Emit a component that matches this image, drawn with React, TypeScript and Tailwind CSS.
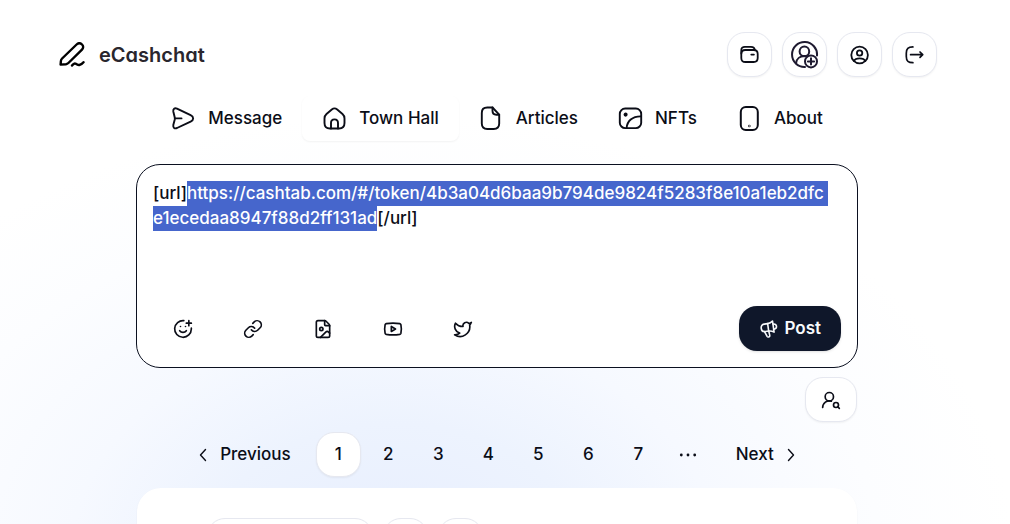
import { useEffect, useRef, useState } from "react";
import type { ReactNode } from "react";
import {
  FileImage,
  Link as LinkIcon,
  SmilePlus,
  Twitter,
  UserRoundSearch,
  Youtube,
} from "lucide-react";
import { clsx } from "clsx";

type IconProps = {
  size: number;
  stroke?: number;
  className?: string;
  children: ReactNode;
};

function Icon({ size, stroke = 1.6, className, children }: IconProps) {
  return (
    <svg
      width={size}
      height={size}
      viewBox={`0 0 ${size} ${size}`}
      fill="none"
      stroke="currentColor"
      strokeWidth={stroke}
      strokeLinecap="round"
      strokeLinejoin="round"
      aria-hidden="true"
      className={clsx("shrink-0", className)}
    >
      {children}
    </svg>
  );
}

const LogoIcon = () => (
  <Icon size={26} stroke={2.4} className="text-black">
    <path d="M1.6 22.6 1.9 19c.1-1 .5-1.8 1.2-2.5L17.6 2.5c1.6-1.5 3.9-1.5 5.4 0 1.6 1.6 1.5 3.6 0 5.1L9.4 21c-.7.7-1.5 1.1-2.5 1.2z" />
    <path d="M13 23.5c1.5-2 2.7-2.5 3.8-1.7 1.2.9 2 1.5 3.5 1.2 1.8-.4 3-1.3 4.2-2.8" />
  </Icon>
);

const WalletIcon = () => (
  <Icon size={20} stroke={1.8}>
    <path d="M1.3 9c0-2.8 1.400-4 4-4h8.400c2.800 0 4 1.400 4 4v4c0 2.800-1.200 4-4 4H5.500c-2.800 0-4.200-1.200-4.200-4z" />
    <path d="M1.3 8.500V5.200C1.300 3.100 2.700 1.900 4.800 1.900H11c2 0 3.600.9 3.800 3.100" />
    <path d="M11.3 9.600h2.600" />
  </Icon>
);

const AddUserIcon = () => (
  <Icon size={28} stroke={2} className="text-[#1e1a30]">
    <path d="M14 26A12.500 12.500 0 1 1 26 14.500" />
    <circle cx="13.400" cy="10.400" r="4.800" />
    <path d="M5 22.300c.5-4.500 4-7.200 8.600-7.200 1 0 1.800.1 2.600.4" />
    <circle cx="20" cy="20.400" r="6" />
    <path d="M20 17.300v6.200M16.900 20.400h6.200" />
  </Icon>
);

const ProfileIcon = () => (
  <Icon size={20} stroke={1.8}>
    <circle cx="9.600" cy="10" r="8.300" />
    <circle cx="9.600" cy="8" r="2.700" />
    <path d="M4 16c.8-1.8 2.8-2.6 5.6-2.6s4.8.8 5.6 2.6" />
  </Icon>
);

const LogoutIcon = () => (
  <Icon size={20} stroke={1.7}>
    <path d="M7.900 1.900C3.100 1.900 1.300 3.500 1.300 8.200v3.200c0 4.700 1.800 6.300 6.600 6.300" />
    <path d="M5.600 9.700h12M15 7 17.700 9.700 15 12.400" />
  </Icon>
);

const MessageIcon = () => (
  <Icon size={25} stroke={1.9}>
    <path d="M2.3 5.5C1.9 2.8 3.6 1.6 6 2.6l13.6 6.6c3.4 1.7 3.4 4.7 0 6.4L6 22c-2.4 1-4.1-.2-3.7-2.9l1.4-5.4c.2-.9.2-1.7 0-2.5z" />
    <path d="M4.2 12.4h6.3" />
  </Icon>
);

const HomeIcon = () => (
  <Icon size={25} stroke={1.9}>
    <path d="M2.5 12.5c0-2 .6-3.3 2-4.5l5.3-4.5c1.8-1.5 3.6-1.5 5.4 0L20.5 8c1.4 1.2 2 2.5 2 4.5v4.6c0 3.6-1.8 5.4-5.4 5.4H7.9c-3.6 0-5.4-1.8-5.4-5.4z" />
    <path d="M9 22.5V17c0-2.3 1.3-3.6 3.5-3.6S16 14.7 16 17v5.5" />
  </Icon>
);

const FileIcon = () => (
  <Icon size={25} stroke={1.9}>
    <path d="M13.5 1.5H8.3c-3.7 0-5.5 1.8-5.5 5.4v10.7c0 3.6 1.8 5.4 5.5 5.4h6.4c3.7 0 5.5-1.8 5.5-5.4V8.7z" />
    <path d="M13.5 1.5v3.3c0 2.6 1.2 3.9 3.8 3.9h2.9" />
  </Icon>
);

const ImageIcon = () => (
  <Icon size={25} stroke={1.9}>
    <rect x="1.8" y="2.5" width="21.4" height="19.6" rx="5.4" />
    <circle cx="7.6" cy="8.6" r="1.1" fill="currentColor" />
    <path d="M8.6 22c.6-6.8 5.6-11.8 14.5-11.6" />
  </Icon>
);

const PhoneIcon = () => (
  <Icon size={25} stroke={2}>
    <rect x="3.8" y="1" width="17" height="23" rx="5" />
    <circle cx="12.3" cy="20" r=".3" fill="currentColor" />
  </Icon>
);

const MegaphoneIcon = () => (
  <Icon size={20} stroke={1.6}>
    <g transform="rotate(-8 10 10)">
      <path d="M9.4 4.500H6C3.800 4.500 2.400 6 2.400 8.200S3.800 12 6 12h3.400c2 0 3.700.6 5.200 1.800V2.600C13.100 3.900 11.400 4.500 9.400 4.500z" />
      <path d="M9.4 4.500V12M14.600 5.600c2 0 3.200 1.100 3.200 2.700s-1.200 2.700-3.200 2.700" />
      <path d="m5.200 12 1.900 5c.6 1.400 2.900 1 2.800-.6L9.400 12" />
    </g>
  </Icon>
);

const accountActions = [
  { label: "Wallet", icon: WalletIcon },
  { label: "Add contact", icon: AddUserIcon },
  { label: "Profile", icon: ProfileIcon },
  { label: "Log out", icon: LogoutIcon },
];

const tabs = [
  { label: "Message", icon: MessageIcon },
  { label: "Town Hall", icon: HomeIcon },
  { label: "Articles", icon: FileIcon },
  { label: "NFTs", icon: ImageIcon },
  { label: "About", icon: PhoneIcon },
];

const attachments = [
  { label: "Emoji", icon: SmilePlus },
  { label: "Link", icon: LinkIcon },
  { label: "Image", icon: FileImage },
  { label: "YouTube", icon: Youtube },
  { label: "Twitter", icon: Twitter },
];

const pages = [1, 2, 3, 4, 5, 6, 7];

const outlineButton =
  "flex h-[45px] items-center justify-center rounded-[18px] border border-[#e6e8f0] bg-white shadow-xs";

function Header() {
  return (
    <header className="mx-auto flex w-full max-w-[880px] items-center justify-between">
      <a href="#" className="flex items-center gap-[14px] pl-0.5">
        <LogoIcon />
        <span className="text-[20px] leading-7 font-semibold text-[#29262d] [font-feature-settings:'cv11']">
          eCashchat
        </span>
      </a>
      <div className="flex gap-[10px]">
        {accountActions.map(({ label, icon: ActionIcon }) => (
          <button key={label} aria-label={label} className={clsx(outlineButton, "w-[45px]")}>
            <ActionIcon />
          </button>
        ))}
      </div>
    </header>
  );
}

function Tabs() {
  const [active, setActive] = useState("Town Hall");

  return (
    <nav className="mt-[19px] flex justify-center">
      {tabs.map(({ label, icon: TabIcon }) => (
        <a
          key={label}
          href="#"
          onClick={() => setActive(label)}
          className={clsx(
            "flex h-[45px] items-center gap-3 rounded-lg px-5 font-medium whitespace-nowrap",
            active === label && "bg-white shadow-xs"
          )}
        >
          <TabIcon />
          {label}
        </a>
      ))}
    </nav>
  );
}

const draft =
  "[url]https://cashtab.com/#/token/4b3a04d6baa9b794de9824f5283f8e10a1eb2dfce1ecedaa8947f88d2ff131ad[/url]";

function Composer() {
  const ref = useRef<HTMLTextAreaElement>(null);

  // keep the pasted link selected between its tags
  useEffect(() => {
    ref.current?.focus();
    ref.current?.setSelectionRange(draft.indexOf("]") + 1, draft.lastIndexOf("["));
  }, []);

  return (
    <form className="mt-[23px] rounded-[24px] border border-[#0b1020] bg-white p-4">
      <textarea
        ref={ref}
        aria-label="Post"
        defaultValue={draft}
        spellCheck={false}
        className="block h-[125px] w-full resize-none pr-3 font-medium break-all outline-none selection:bg-[#4666cc] selection:text-white"
      />
      <div className="flex items-center justify-between">
        <div className="flex gap-[10px]">
          {attachments.map(({ label, icon: AttachIcon }) => (
            <button
              key={label}
              type="button"
              aria-label={label}
              className="flex h-[45px] w-[60px] items-center justify-center"
            >
              <AttachIcon size={20} strokeWidth={2} />
            </button>
          ))}
        </div>
        <button
          type="button"
          className="flex h-[45px] items-center gap-[5px] rounded-[18px] bg-[#0f172a] px-5 font-semibold text-slate-50 shadow-sm"
        >
          <MegaphoneIcon />
          Post
        </button>
      </div>
    </form>
  );
}

function Pagination() {
  return (
    <nav aria-label="Pagination" className="mt-[10px] flex justify-center gap-[5px] font-medium">
      <a href="#" className="flex h-[45px] items-center gap-[5px] pr-5 pl-[15px]">
        <Icon size={20} stroke={1.4}>
          <path d="m10.500 4.500-5 5.500 5 5.500" />
        </Icon>
        Previous
      </a>
      {pages.map((page) => (
        <a
          key={page}
          href="#"
          className={clsx(
            page === 1 ? outlineButton : "flex h-[45px] items-center justify-center",
            "w-[45px]"
          )}
        >
          {page}
        </a>
      ))}
      <span className="flex h-[45px] w-[45px] items-center justify-center">
        <Icon size={20} stroke={0}>
          <g fill="currentColor">
            <circle cx="3.3" cy="10" r="1.4" />
            <circle cx="10" cy="10" r="1.4" />
            <circle cx="16.7" cy="10" r="1.4" />
          </g>
        </Icon>
      </span>
      <a href="#" className="flex h-[45px] items-center gap-[5px] pr-[15px] pl-5">
        Next
        <Icon size={20} stroke={1.4}>
          <path d="m9.500 4.500 5 5.500-5 5.500" />
        </Icon>
      </a>
    </nav>
  );
}

export default function App() {
  return (
    <div className="flex h-screen flex-col overflow-hidden bg-white bg-[radial-gradient(ellipse_620px_440px_at_39%_106%,#e7eefe_0%,#edf3fe_30%,#f6f9ff_52%,#fcfdff_78%,#ffffff_100%)] pt-8 pr-4 font-['Inter',sans-serif] text-[17px] leading-[25px] text-[#0b0d17]">
      <Header />
      <Tabs />
      <main className="mx-auto flex w-full max-w-[722px] flex-1 flex-col">
        <Composer />
        <div className="mx-px mt-[9px] flex justify-end">
          <button aria-label="Find user" className={clsx(outlineButton, "w-[52px]")}>
            <UserRoundSearch size={20} strokeWidth={2} />
          </button>
        </div>
        <Pagination />
        <section className="mx-px mt-[11px] flex-1 rounded-t-[24px] bg-white px-[70px] pt-[30px] shadow-xs">
          <div className="flex gap-[10px]">
            <button aria-label="Author" className={clsx(outlineButton, "w-[166px]")} />
            <button aria-label="Reply" className={clsx(outlineButton, "w-[45px]")} />
            <button aria-label="Share" className={clsx(outlineButton, "w-[45px]")} />
          </div>
        </section>
      </main>
    </div>
  );
}
